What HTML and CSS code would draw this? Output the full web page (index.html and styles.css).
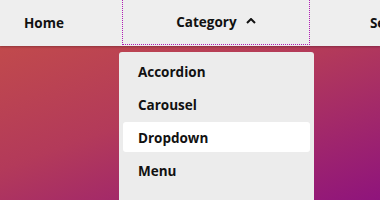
FILE: index.html
```html
<!DOCTYPE html>
<html>
<head>
    <link rel="stylesheet" href="styles.css">
</head>
<body>
    <nav class="navbar">
        <a class="nav-link home" href="#">Home</a>
        <div class="nav-dropdown">
            <button class="nav-toggle" aria-expanded="true">
                Category
                <svg class="chevron" width="10" height="6" viewBox="0 0 10 6">
                    <path d="M1 5 L5 1 L9 5" fill="none" stroke="#111" stroke-width="2"/>
                </svg>
            </button>
            <ul class="dropdown-menu">
                <li><a href="#">Accordion</a></li>
                <li><a href="#">Carousel</a></li>
                <li><a href="#" class="active">Dropdown</a></li>
                <li><a href="#">Menu</a></li>
            </ul>
        </div>
        <a class="nav-link search" href="#">Search</a>
    </nav>
</body>
</html>
```

FILE: styles.css
```css
body {
    margin: 0;
    width: 100vw;
    height: 100vh;
    overflow: hidden;
    font-family: 'Open Sans', 'Noto Sans', sans-serif;
    background: linear-gradient(160deg, #c65047 0%, #b33a5a 50%, #8f147c 100%);
    color: #111;
}
.navbar {
    display: flex;
    align-items: stretch;
    height: 46px;
    background: #eeeeee;
    box-shadow: 0 1px 2px rgba(0, 0, 0, 0.25);
    white-space: nowrap;
}
.nav-link {
    display: flex;
    align-items: center;
    flex-shrink: 0;
    color: #111;
    text-decoration: none;
    font-weight: 700;
    font-size: 13.5px;
}
.home {
    padding: 0 24px;
    margin-right: 33px;
}
.search {
    padding-left: 59px;
}
.nav-dropdown {
    position: relative;
    flex-shrink: 0;
    width: 190px;
}
.nav-toggle {
    width: 100%;
    height: calc(100% + 4px);
    margin-top: -4px;
    display: flex;
    align-items: center;
    justify-content: center;
    gap: 9px;
    padding: 4px 0 2px 0;
    background: transparent;
    border: none;
    outline: 1px dotted #b01cb4;
    outline-offset: -2px;
    font-family: inherit;
    font-weight: 700;
    font-size: 13.5px;
    color: #111;
}
.chevron {
    margin-top: -2px;
}
.dropdown-menu {
    position: absolute;
    top: 52px;
    left: -2px;
    width: 195px;
    box-sizing: border-box;
    margin: 0;
    padding: 4px;
    list-style: none;
    background: #ececec;
    border-radius: 3px;
    height: 160px;
    display: flex;
    flex-direction: column;
    gap: 3px;
}
.dropdown-menu a {
    display: flex;
    align-items: center;
    box-sizing: border-box;
    height: 30px;
    padding: 2px 0 0 15px;
    border-radius: 3px;
    color: #111;
    text-decoration: none;
    font-weight: 700;
    font-size: 13.5px;
}
.dropdown-menu a.active {
    background: #ffffff;
}
```
